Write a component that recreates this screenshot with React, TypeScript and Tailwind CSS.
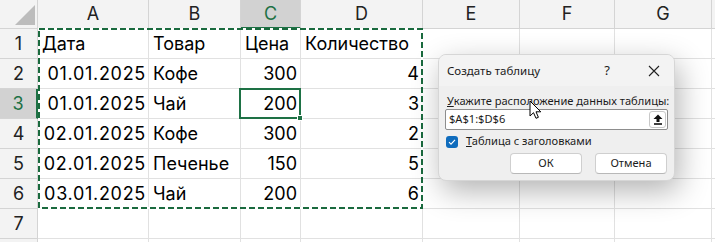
import React from "react";

const cols = ["A", "B", "C", "D", "E", "F", "G", ""];
type Cell = { t: string; right?: boolean; date?: boolean };
const d = (t: string): Cell => ({ t, right: true, date: true });
const n = (t: string): Cell => ({ t, right: true });
const s = (t: string): Cell => ({ t });
const data: Cell[][] = [
  [s("Дата"), s("Товар"), s("Цена"), s("Количество")],
  [d("01.01.2025"), s("Кофе"), n("300"), n("4")],
  [d("01.01.2025"), s("Чай"), n("200"), n("3")],
  [d("02.01.2025"), s("Кофе"), n("300"), n("2")],
  [d("02.01.2025"), s("Печенье"), n("150"), n("5")],
  [d("03.01.2025"), s("Чай"), n("200"), n("6")],
];

function Grid() {
  const cells: React.ReactNode[] = [];
  cells.push(
    <div key="corner" className="relative border-r border-b border-[#d4d4d4] bg-[#f3f3f3]">
      <svg className="absolute left-0 top-0" width="37" height="28" viewBox="0 0 37 28">
        <polygon points="15,25 35,25 35,5" fill="#bcbcbc" />
      </svg>
    </div>
  );
  cols.forEach((c, i) => {
    const sel = c === "C";
    cells.push(
      <div
        key={"h" + i}
        className={
          "flex items-center justify-center border-r border-[#d4d4d4] text-[18px] " +
          (sel
            ? "bg-[#d2d2d2] text-[#1e7145] border-b-2 border-b-[#1e7145]"
            : "bg-[#f3f3f3] text-[#222] border-b border-b-[#d4d4d4]")
        }
      >
        {c}
      </div>
    );
  });
  for (let r = 1; r <= 8; r++) {
    const sel = r === 3;
    cells.push(
      <div
        key={"r" + r}
        className={
          "flex items-center justify-center border-b border-[#d4d4d4] text-[18px] " +
          (sel
            ? "bg-[#d2d2d2] text-[#1e7145] border-r-2 border-r-[#1e7145]"
            : "bg-[#f3f3f3] text-[#222] border-r border-r-[#d4d4d4]")
        }
      >
        {r <= 7 ? r : ""}
      </div>
    );
    for (let c = 0; c < 8; c++) {
      const cell = data[r - 1]?.[c];
      cells.push(
        <div
          key={"c" + r + "-" + c}
          className={
            "flex items-center border-r border-b border-[#e1e1e1] text-[18px] text-black whitespace-nowrap overflow-visible " +
            (cell?.date
              ? "justify-end pr-[2px] tracking-[0.7px]"
              : cell?.right
              ? "justify-end pr-[3px]"
              : "justify-start pl-[4px]")
          }
        >
          {cell?.t ?? ""}
        </div>
      );
    }
  }
  return (
    <div
      className="grid grid-cols-[38px_111px_92px_60px_122px_97px_95px_97px_1fr] grid-rows-[29px_repeat(8,30px)] leading-none"
      style={{ fontFamily: "Inter, 'Noto Sans', sans-serif" }}
    >
      {cells}
    </div>
  );
}

function Dialog() {
  return (
    <div
      className="absolute left-[438px] top-[54px] w-[237px] h-[127px] rounded-[8px] bg-[#efefef] border border-[#d6d6d6] shadow-[4px_10px_30px_rgba(0,0,0,0.30)] overflow-hidden text-[11.1px] text-[#1b1b1b]"
      style={{ fontFamily: "'Noto Sans', 'Open Sans', sans-serif" }}
    >
      <div className="flex h-[31px] items-center bg-[#f3f3f3] pl-[8px] text-[11.5px]">
        <span className="flex-1">Создать таблицу</span>
        <span className="w-[14px] text-center text-[13px] mr-[34px]">?</span>
        <svg width="12" height="12" viewBox="0 0 12 12" className="mr-[14px]">
          <path d="M1 1 L11 11 M11 1 L1 11" stroke="#222" strokeWidth="1.1" />
        </svg>
      </div>
      <div className="flex flex-col px-[6px] pt-[7px]">
        <div className="pl-[2px] leading-[15px] whitespace-nowrap">
          <span className="underline">У</span>кажите расположение данных таблицы:
        </div>
        <div className="mt-[1px] flex h-[21px] items-center rounded-[2px] border border-[#8d8d8d] bg-white pl-[3px] pr-[1px]">
          <span className="flex-1">$A$1:$D$6</span>
          <div className="flex h-[17px] w-[17px] items-center justify-center rounded-[3px] border border-[#c8c8c8] bg-white">
            <svg width="10" height="11" viewBox="0 0 10 11">
              <path d="M5 0.5 L9.5 5 H6.5 V8 H3.5 V5 H0.5 Z" fill="#111" />
              <rect x="1" y="9.2" width="8" height="1.6" fill="#111" />
            </svg>
          </div>
        </div>
        <div className="mt-[4px] flex h-[15px] items-center pl-[1px]">
          <div className="flex h-[12px] w-[12px] items-center justify-center rounded-[3px] bg-[#0f6cbd]">
            <svg width="8" height="8" viewBox="0 0 8 8">
              <path d="M1 4.2 L3 6.2 L7 1.8" stroke="white" strokeWidth="1.1" fill="none" />
            </svg>
          </div>
          <span className="ml-[8px]">
            <span className="underline">Т</span>аблица с заголовками
          </span>
        </div>
        <div className="mt-[4px] flex justify-end gap-[13px] pr-[1px]">
          <div className="flex h-[21px] w-[72px] items-center justify-center rounded-[4px] border border-[#cfcfcf] border-b-[#b8b8b8] bg-white">
            ОК
          </div>
          <div className="flex h-[21px] w-[72px] items-center justify-center rounded-[4px] border border-[#cfcfcf] border-b-[#b8b8b8] bg-white">
            Отмена
          </div>
        </div>
      </div>
    </div>
  );
}

export default function App() {
  return (
    <div className="relative h-[242px] w-[715px] overflow-hidden bg-white">
      <Grid />
      <svg className="pointer-events-none absolute left-0 top-0" width="715" height="242">
        <rect x="39" y="29" width="383" height="179" fill="none" stroke="#ffffff" strokeWidth="2" />
        <rect x="39" y="29" width="383" height="179" fill="none" stroke="#1a6a3e" strokeWidth="2" strokeDasharray="6 3" />
      </svg>
      <div className="pointer-events-none absolute left-[239px] top-[88px] h-[31px] w-[62px] border-2 border-[#1e7145]" />
      <div className="pointer-events-none absolute left-[297px] top-[115px] h-[6px] w-[6px] border border-white bg-[#1e7145]" />
      <Dialog />
      <svg className="pointer-events-none absolute left-[529px] top-[100px]" width="15" height="21" viewBox="0 0 15 21">
        <path d="M1 1 L1 16 L4.5 12.7 L7 18.3 L9.4 17.3 L7 11.8 L11.8 11.8 Z" fill="white" stroke="black" strokeWidth="1" strokeLinejoin="round" />
      </svg>
    </div>
  );
}
